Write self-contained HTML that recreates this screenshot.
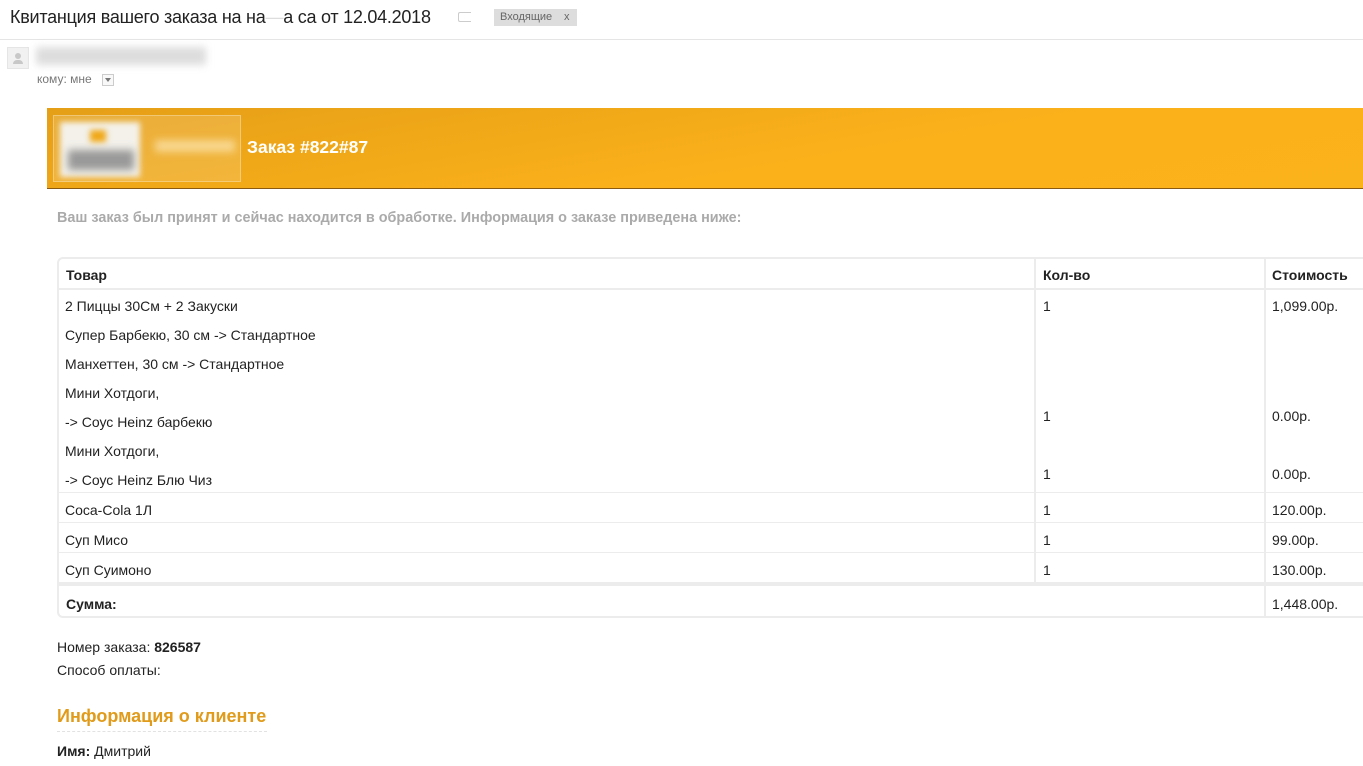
<!DOCTYPE html>
<html><head><meta charset="utf-8"><style>
*{margin:0;padding:0;box-sizing:border-box}
body{width:1363px;height:766px;overflow:hidden;background:#fff;font-family:"Liberation Sans",Arial,sans-serif;position:relative;color:#222}
.a{position:absolute;white-space:nowrap}
.t{font-size:14px;line-height:16px;color:#222}
.b{font-weight:bold}
.vl{position:absolute;width:2px;background:#ececec}
.hl{position:absolute;height:2px;background:#ececec;left:58px;width:1320px}
</style></head><body>
<div class="a" style="left:10px;top:6px;font-size:18px;line-height:22px;color:#222;letter-spacing:-0.25px">Квитанция вашего заказа на на<span style="color:#ddd">—</span>а са от 12.04.2018</div>
<div class="a" style="left:458px;top:12px;width:13px;height:10px;border:1px solid #ccc;border-right:none;border-radius:2px 0 0 2px"></div>
<div class="a" style="left:494px;top:9px;width:83px;height:17px;background:#ddd;font-size:11px;line-height:17px;color:#666;padding-left:6px">Входящие<span style="position:absolute;left:70px">x</span></div>
<div class="a" style="left:0;top:39px;width:1363px;height:1px;background:#e5e5e5"></div>
<div class="a" style="left:7px;top:47px;width:22px;height:22px;background:#f1f1f1;border:1px solid #e5e5e5"></div>
<div class="a" style="left:15px;top:53px;width:6px;height:6px;border-radius:50%;background:#c8c8c8"></div>
<div class="a" style="left:13px;top:60px;width:10px;height:4px;border-radius:4px 4px 0 0;background:#c8c8c8"></div>
<div class="a" style="left:36px;top:47px;width:170px;height:18px;background:#ddd;filter:blur(4px)"></div>
<div class="a" style="left:37px;top:72px;font-size:12px;color:#777">кому: мне</div>
<div class="a" style="left:102px;top:74px;width:12px;height:12px;border:1px solid #ccc;background:#f8f8f8"></div>
<div class="a" style="left:105px;top:78px;width:0;height:0;border-left:3px solid transparent;border-right:3px solid transparent;border-top:4px solid #777"></div>

<div class="a" style="left:47px;top:108px;width:1316px;height:81px;background:linear-gradient(170deg,#e59f17 0%,#fbb11a 60%,#fbb31b 100%);border-bottom:1px solid #8a5a10"></div>
<div class="a" style="left:53px;top:115px;width:188px;height:67px;background:rgba(255,255,255,0.15);border:1px solid rgba(255,255,255,0.3)"></div>
<div class="a" style="left:60px;top:122px;width:80px;height:55px;background:#f3f1ea;filter:blur(3px)"></div>
<div class="a" style="left:68px;top:150px;width:66px;height:20px;background:#999;filter:blur(4px)"></div>
<div class="a" style="left:90px;top:130px;width:16px;height:12px;background:#f0a818;filter:blur(3px)"></div>
<div class="a" style="left:155px;top:140px;width:80px;height:12px;background:rgba(255,240,200,0.6);filter:blur(4px)"></div>
<div class="a b" style="left:247px;top:137px;font-size:17.5px;line-height:20px;color:#fff">Заказ #822#87</div>

<div class="a b" style="left:57px;top:210px;font-size:14.4px;color:#aaa">Ваш заказ был принят и сейчас находится в обработке. Информация о заказе приведена ниже:</div>

<div class="a" style="left:57px;top:257px;width:1330px;height:361px;border:2px solid #ececec;border-radius:6px"></div>
<div class="hl" style="top:288px"></div>
<div class="hl" style="top:492px;height:1px"></div>
<div class="hl" style="top:522px;height:1px"></div>
<div class="hl" style="top:552px;height:1px"></div>
<div class="hl" style="top:582px;height:4px"></div>
<div class="vl" style="left:1034px;top:258px;height:326px"></div>
<div class="vl" style="left:1264px;top:258px;height:360px"></div>

<div class="a t b" style="left:66px;top:267px">Товар</div>
<div class="a t b" style="left:1043px;top:267px">Кол-во</div>
<div class="a t b" style="left:1272px;top:267px">Стоимость</div>

<div class="a t" style="left:65px;top:298px">2 Пиццы 30См + 2 Закуски</div>
<div class="a t" style="left:65px;top:327px">Супер Барбекю, 30 см -&gt; Стандартное</div>
<div class="a t" style="left:65px;top:356px">Манхеттен, 30 см -&gt; Стандартное</div>
<div class="a t" style="left:65px;top:385px">Мини Хотдоги,</div>
<div class="a t" style="left:65px;top:414px">-&gt; Соус Heinz барбекю</div>
<div class="a t" style="left:65px;top:443px">Мини Хотдоги,</div>
<div class="a t" style="left:65px;top:472px">-&gt; Соус Heinz Блю Чиз</div>
<div class="a t" style="left:65px;top:502px">Coca-Cola 1Л</div>
<div class="a t" style="left:65px;top:532px">Суп Мисо</div>
<div class="a t" style="left:65px;top:562px">Суп Суимоно</div>
<div class="a t b" style="left:66px;top:596px">Сумма:</div>

<div class="a t" style="left:1043px;top:298px">1</div>
<div class="a t" style="left:1043px;top:408px">1</div>
<div class="a t" style="left:1043px;top:466px">1</div>
<div class="a t" style="left:1043px;top:502px">1</div>
<div class="a t" style="left:1043px;top:532px">1</div>
<div class="a t" style="left:1043px;top:562px">1</div>

<div class="a t" style="left:1272px;top:298px">1,099.00р.</div>
<div class="a t" style="left:1272px;top:408px">0.00р.</div>
<div class="a t" style="left:1272px;top:466px">0.00р.</div>
<div class="a t" style="left:1272px;top:502px">120.00р.</div>
<div class="a t" style="left:1272px;top:532px">99.00р.</div>
<div class="a t" style="left:1272px;top:562px">130.00р.</div>
<div class="a t" style="left:1272px;top:596px">1,448.00р.</div>

<div class="a t" style="left:57px;top:639px">Номер заказа: <b>826587</b></div>
<div class="a t" style="left:57px;top:662px">Способ оплаты:</div>
<div class="a b" style="left:57px;top:706px;font-size:18px;line-height:20px;color:#e09b1a">Информация о клиенте</div>
<div class="a" style="left:57px;top:731px;width:210px;border-top:1px dashed #e2e2e2"></div>
<div class="a t" style="left:57px;top:743px"><b>Имя:</b> Дмитрий</div>
</body></html>
